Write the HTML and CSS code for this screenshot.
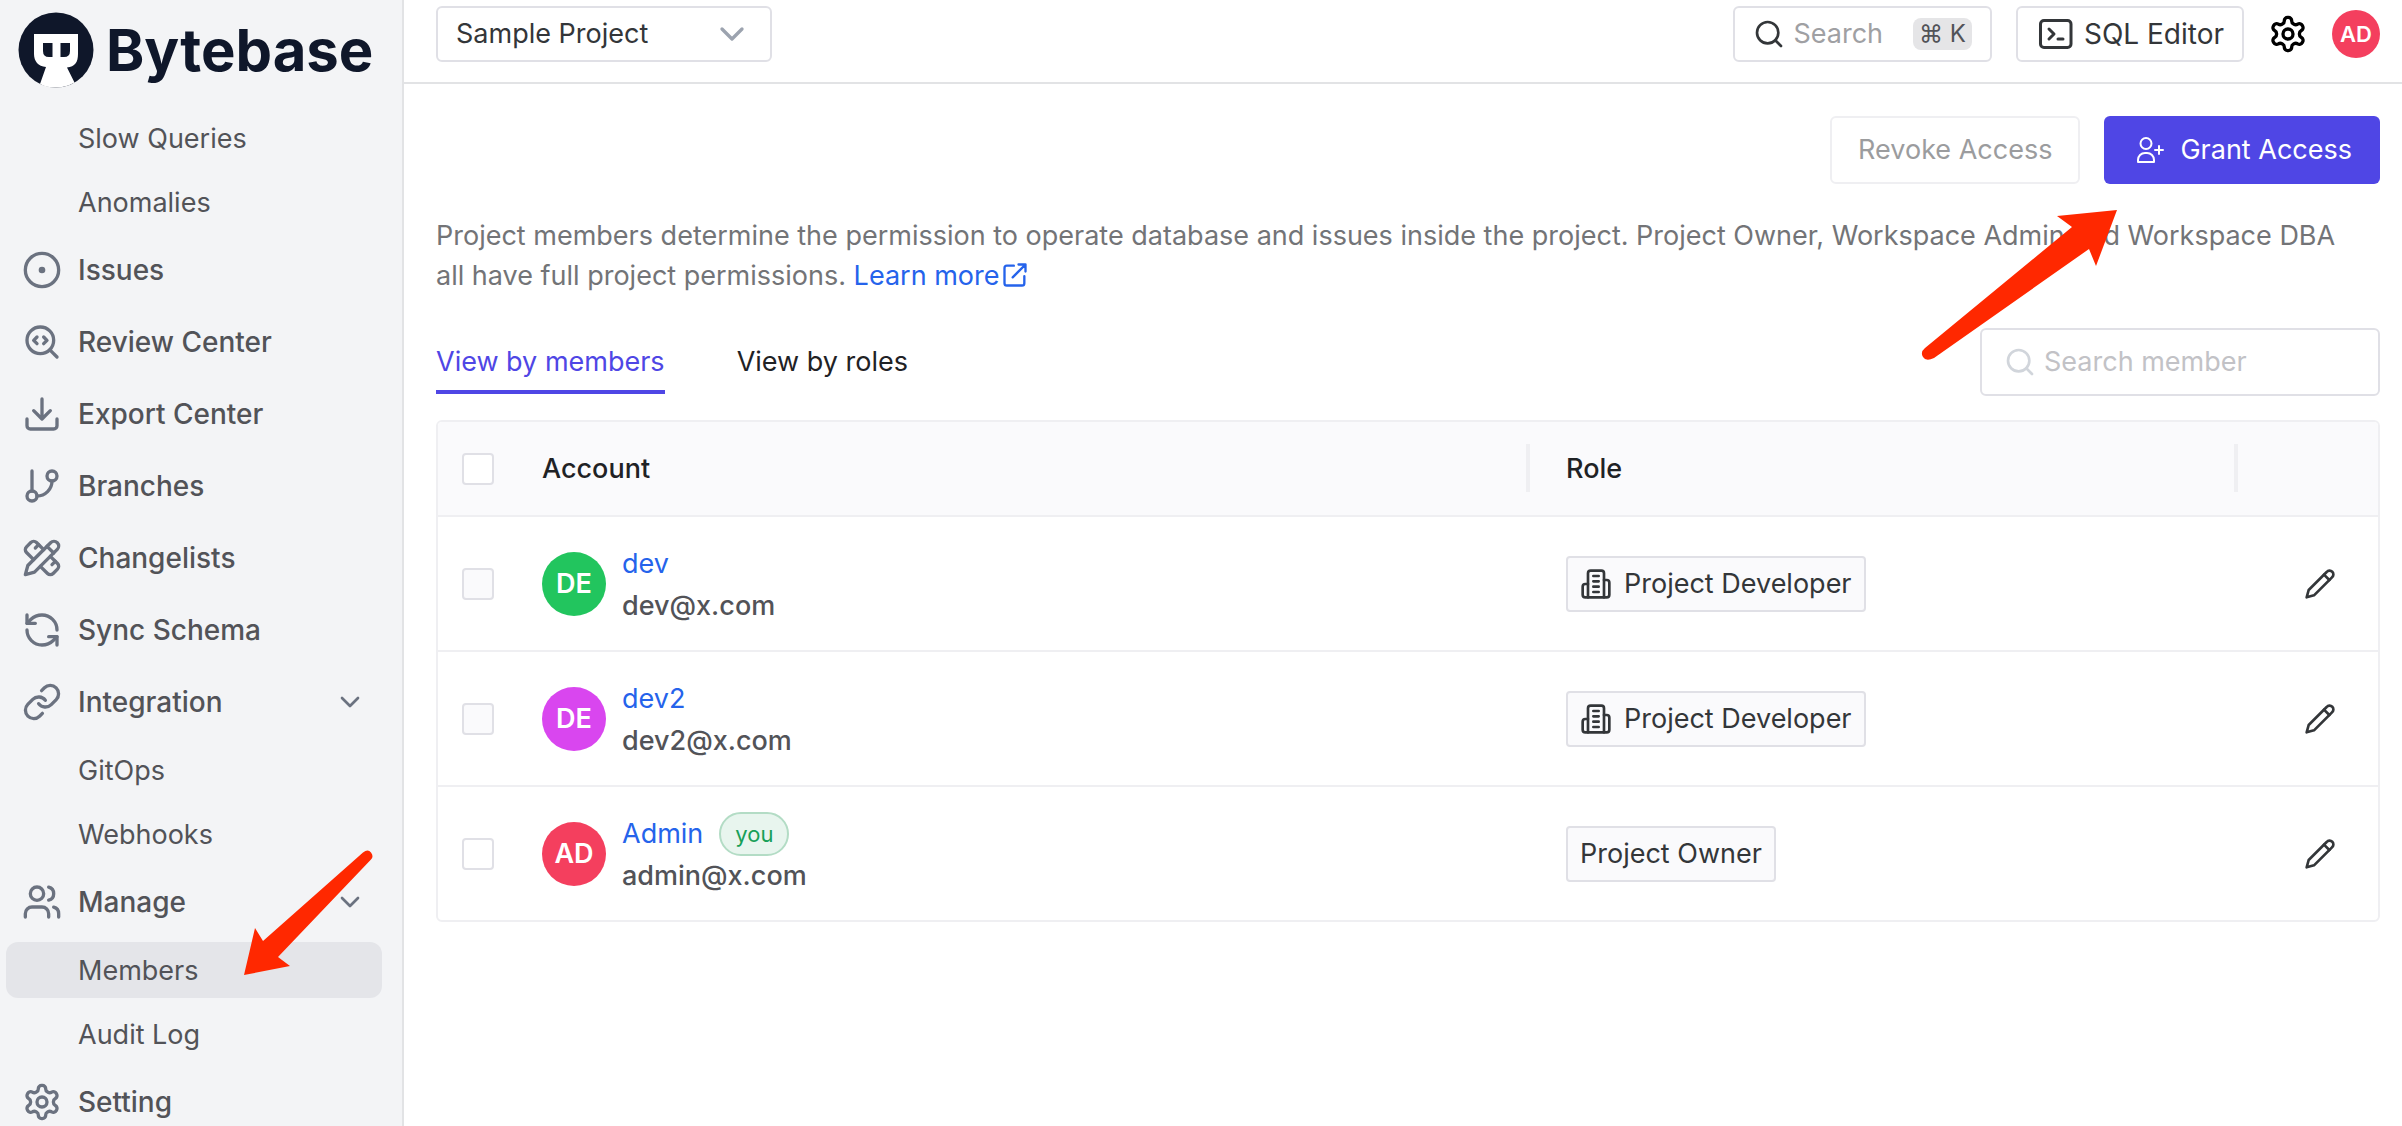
FILE: index.html
```html
<!DOCTYPE html>
<html lang="en">
<head>
<meta charset="utf-8">
<title>Members - Bytebase</title>
<link rel="stylesheet" href="styles.css">
</head>
<body>
<svg class="sprite" aria-hidden="true">
  <symbol id="i-chevron" viewBox="0 0 24 24"><path d="m6 9 6 6 6-6"/></symbol>
  <symbol id="i-search" viewBox="0 0 24 24"><circle cx="11" cy="11" r="8"/><path d="m21 21-4.3-4.3"/></symbol>
  <symbol id="i-settings" viewBox="0 0 24 24"><path d="M12.22 2h-.44a2 2 0 0 0-2 2v.18a2 2 0 0 1-1 1.73l-.43.25a2 2 0 0 1-2 0l-.15-.08a2 2 0 0 0-2.73.73l-.22.38a2 2 0 0 0 .73 2.73l.15.1a2 2 0 0 1 1 1.72v.51a2 2 0 0 1-1 1.74l-.15.09a2 2 0 0 0-.73 2.73l.22.38a2 2 0 0 0 2.73.73l.15-.08a2 2 0 0 1 2 0l.43.25a2 2 0 0 1 1 1.73V20a2 2 0 0 0 2 2h.44a2 2 0 0 0 2-2v-.18a2 2 0 0 1 1-1.73l.43-.25a2 2 0 0 1 2 0l.15.08a2 2 0 0 0 2.73-.73l.22-.39a2 2 0 0 0-.73-2.73l-.15-.08a2 2 0 0 1-1-1.74v-.5a2 2 0 0 1 1-1.74l.15-.09a2 2 0 0 0 .73-2.73l-.22-.38a2 2 0 0 0-2.73-.73l-.15.08a2 2 0 0 1-2 0l-.43-.25a2 2 0 0 1-1-1.73V4a2 2 0 0 0-2-2z"/><circle cx="12" cy="12" r="3"/></symbol>
  <symbol id="i-pencil" viewBox="0 0 24 24"><path d="M17 3a2.85 2.83 0 1 1 4 4L7.5 20.5 2 22l1.5-5.500Z"/><path d="m15 5 4 4"/></symbol>
  <symbol id="i-building" viewBox="0 0 24 24"><path d="M6 22V4a2 2 0 0 1 2-2h8a2 2 0 0 1 2 2v18Z"/><path d="M6 12H4a2 2 0 0 0-2 2v6a2 2 0 0 0 2 2h2"/><path d="M18 9h2a2 2 0 0 1 2 2v9a2 2 0 0 1-2 2h-2"/><path d="M10 6h4M10 10h4M10 14h4M10 18h4"/></symbol>
</svg>

<div class="app">
  <aside class="sidebar">
    <a class="brand" href="#">
      <svg class="brand-mark" viewBox="0 0 76 76" aria-hidden="true">
        <circle cx="38" cy="38" r="37.500" fill="#0f172a"/>
        <path fill="#fff" d="M16 22h44v20c0 8-3 13-11 13.500L56.500 70.500Q48 75.500 38 75.500T22 72L28 55C20 54.500 16 49 16 42Z"/>
        <path fill="#0f172a" d="M25 31h9.500v14H31q-6 0-6-6ZM42.500 31H52v8q0 6-6 6h-3.500Z"/>
      </svg>
      <span class="brand-name">Bytebase</span>
    </a>
    <nav class="nav" aria-label="Project">
      <a class="nav-sub" href="#">Slow Queries</a>
      <a class="nav-sub" href="#">Anomalies</a>
      <a class="nav-main" href="#"><svg class="icon icon-lg" viewBox="0 0 24 24"><circle cx="12" cy="12" r="10"/><circle cx="12" cy="12" r="1"/></svg>Issues</a>
      <a class="nav-main" href="#"><svg class="icon icon-lg" viewBox="0 0 24 24"><path d="m9 9-2 2 2 2M13 13l2-2-2-2"/><circle cx="11" cy="11" r="8"/><path d="m21 21-4.300-4.300"/></svg>Review Center</a>
      <a class="nav-main" href="#"><svg class="icon icon-lg" viewBox="0 0 24 24"><path d="M21 15v4a2 2 0 0 1-2 2H5a2 2 0 0 1-2-2v-4M7 10l5 5 5-5M12 15V3"/></svg>Export Center</a>
      <a class="nav-main" href="#"><svg class="icon icon-lg" viewBox="0 0 24 24"><path d="M6 3v12"/><circle cx="18" cy="6" r="3"/><circle cx="6" cy="18" r="3"/><path d="M18 9a9 9 0 0 1-9 9"/></svg>Branches</a>
      <a class="nav-main" href="#"><svg class="icon icon-lg" viewBox="0 0 24 24"><path d="m15 5 4 4"/><path d="M13 7 8.700 2.700a2.410 2.410 0 0 0-3.400 0L2.700 5.300a2.410 2.410 0 0 0 0 3.400L7 13"/><path d="m8 6 2-2"/><path d="m2 22 5.500-1.500L21.170 6.830a2.820 2.820 0 0 0-4-4L3.500 16.500Z"/><path d="m18 16 2-2"/><path d="m17 11 4.300 4.300c.94.94.94 2.460 0 3.400l-2.600 2.600c-.94.94-2.460.94-3.400 0L11 17"/></svg>Changelists</a>
      <a class="nav-main" href="#"><svg class="icon icon-lg" viewBox="0 0 24 24"><path d="M21 12a9 9 0 0 0-9-9 9.750 9.750 0 0 0-6.740 2.740L3 8"/><path d="M3 3v5h5"/><path d="M3 12a9 9 0 0 0 9 9 9.750 9.750 0 0 0 6.740-2.740L21 16"/><path d="M16 16h5v5"/></svg>Sync Schema</a>
      <button class="nav-main" type="button" aria-expanded="true"><svg class="icon icon-lg" viewBox="0 0 24 24"><path d="M10 13a5 5 0 0 0 7.540.54l3-3a5 5 0 0 0-7.070-7.070l-1.720 1.710"/><path d="M14 11a5 5 0 0 0-7.540-.54l-3 3a5 5 0 0 0 7.070 7.070l1.710-1.710"/></svg>Integration<svg class="icon icon-md nav-caret"><use href="#i-chevron"/></svg></button>
      <a class="nav-sub" href="#">GitOps</a>
      <a class="nav-sub" href="#">Webhooks</a>
      <button class="nav-main" type="button" aria-expanded="true"><svg class="icon icon-lg" viewBox="0 0 24 24"><path d="M16 21v-2a4 4 0 0 0-4-4H6a4 4 0 0 0-4 4v2"/><circle cx="9" cy="7" r="4"/><path d="M22 21v-2a4 4 0 0 0-3-3.870"/><path d="M16 3.130a4 4 0 0 1 0 7.750"/></svg>Manage<svg class="icon icon-md nav-caret"><use href="#i-chevron"/></svg></button>
      <a class="nav-sub is-active" href="#" aria-current="page">Members</a>
      <a class="nav-sub" href="#">Audit Log</a>
      <a class="nav-main" href="#"><svg class="icon icon-lg"><use href="#i-settings"/></svg>Setting</a>
    </nav>
    <svg class="arrow arrow-members" viewBox="0 0 130 130" aria-hidden="true"><path fill="#ff2800" d="M1 127 12 80l8 13L120 4.500q5-4 8 0t0 7L35 109l12 9Z"/></svg>
  </aside>

  <div class="page">
    <header class="topbar">
      <div class="select-wrap">
        <select class="select" aria-label="Project"><option>Sample Project</option></select>
        <svg class="icon icon-lg select-caret"><use href="#i-chevron"/></svg>
      </div>
      <div class="topbar-actions">
        <button class="btn-outline" type="button"><svg class="icon icon-md"><use href="#i-search"/></svg><span class="hint">Search</span><kbd class="kbd">⌘ K</kbd></button>
        <button class="btn-outline btn-sql" type="button"><svg class="icon icon-lg icon-terminal" viewBox="0 0 40 40"><rect x="4.500" y="6.500" width="30.500" height="27" rx="3.500"/><path d="m13 15 5 5-5 5M22 25h5"/></svg>SQL Editor</button>
        <button class="btn-icon btn-gear" type="button" aria-label="Settings"><svg class="icon icon-lg"><use href="#i-settings"/></svg></button>
        <button class="avatar avatar-sm avatar-red" type="button">AD</button>
      </div>
    </header>

    <main class="content">
      <div class="actions">
        <button class="btn btn-default" type="button" disabled>Revoke Access</button>
        <button class="btn btn-primary" type="button"><svg class="icon icon-md" viewBox="0 0 32 32"><circle cx="12" cy="9.500" r="5.500"/><path d="M4 28v-2a7 7 0 0 1 7-7h2a7 7 0 0 1 7 7v2ZM25 12v8M21 16h8"/></svg>Grant Access</button>
        <svg class="arrow arrow-grant" viewBox="0 0 198 154" aria-hidden="true"><path fill="#ff2800" d="M196 2 136 8l15 11L4 140q-5 4-2 9t11 1L168 41l7 17Z"/></svg>
      </div>
      <p class="intro">Project members determine the permission to operate database and issues inside the project. Project Owner, Workspace Admin and Workspace DBA all have full project permissions. <a class="link" href="#">Learn more<svg class="icon learn-icon" viewBox="0 0 24 24"><path d="M20 13v6a2 2 0 0 1-2 2H5a2 2 0 0 1-2-2V6a2 2 0 0 1 2-2h6M15 3h6v6M10 14 21 3"/></svg></a></p>

      <div class="toolbar">
        <div class="tabs" role="tablist">
          <button class="tab is-selected" type="button" role="tab" aria-selected="true">View by members</button>
          <button class="tab" type="button" role="tab" aria-selected="false">View by roles</button>
        </div>
        <label class="search"><svg class="icon icon-md"><use href="#i-search"/></svg><input class="search-input" type="search" placeholder="Search member" aria-label="Search member"></label>
      </div>

      <div class="table-wrap">
        <table class="table">
          <colgroup><col class="col-check"><col><col class="col-role"><col class="col-edit"></colgroup>
          <thead>
            <tr><th><input class="check" type="checkbox" aria-label="Select all"></th><th class="has-divider">Account</th><th class="has-divider">Role</th><th></th></tr>
          </thead>
          <tbody>
            <tr>
              <td><input class="check" type="checkbox" aria-label="Select dev" disabled></td>
              <td><div class="account"><span class="avatar avatar-green">DE</span><div><div class="name"><a class="link" href="#">dev</a></div><div class="email">dev@x.com</div></div></div></td>
              <td><span class="tag"><svg class="icon icon-md"><use href="#i-building"/></svg>Project Developer</span></td>
              <td class="edit"><button class="btn-icon" type="button" aria-label="Edit dev"><svg class="icon icon-md"><use href="#i-pencil"/></svg></button></td>
            </tr>
            <tr>
              <td><input class="check" type="checkbox" aria-label="Select dev2" disabled></td>
              <td><div class="account"><span class="avatar avatar-purple">DE</span><div><div class="name"><a class="link" href="#">dev2</a></div><div class="email">dev2@x.com</div></div></div></td>
              <td><span class="tag"><svg class="icon icon-md"><use href="#i-building"/></svg>Project Developer</span></td>
              <td class="edit"><button class="btn-icon" type="button" aria-label="Edit dev2"><svg class="icon icon-md"><use href="#i-pencil"/></svg></button></td>
            </tr>
            <tr>
              <td><input class="check" type="checkbox" aria-label="Select Admin"></td>
              <td><div class="account"><span class="avatar avatar-red">AD</span><div><div class="name"><a class="link" href="#">Admin</a><span class="pill">you</span></div><div class="email">admin@x.com</div></div></div></td>
              <td><span class="tag">Project Owner</span></td>
              <td class="edit"><button class="btn-icon" type="button" aria-label="Edit Admin"><svg class="icon icon-md"><use href="#i-pencil"/></svg></button></td>
            </tr>
          </tbody>
        </table>
      </div>
    </main>
  </div>
</div>
</body>
</html>
```
FILE: styles.css
```css
* { box-sizing: border-box; }

body {
  margin: 0;
  font-family: Inter, "Liberation Sans", sans-serif;
  font-size: 27px;
  line-height: 40px;
  color: #333639;
  background: #fff;
}

button, input, select { font: inherit; color: inherit; }
button { margin: 0; padding: 0; border: 0; background: none; cursor: pointer; }
a { color: inherit; text-decoration: none; }

.sprite { display: none; }
.icon {
  flex: none;
  width: 28px;
  height: 28px;
  fill: none;
  stroke: currentColor;
  stroke-width: 2;
  stroke-linecap: round;
  stroke-linejoin: round;
}
.icon-md { width: 32px; height: 32px; }
.icon-lg { width: 40px; height: 40px; }
.icon-terminal { stroke-width: 3; }

.app { display: flex; height: 100vh; overflow: hidden; }

/* Sidebar */
.sidebar {
  position: relative;
  flex: none;
  width: 404px;
  padding: 0 20px 0 6px;
  background: #f3f4f6;
  border-right: 2px solid #e2e3e5;
}
.brand { display: flex; align-items: center; gap: 12px; height: 106px; padding: 0 0 6px 12px; color: #0f172a; }
.brand-mark { flex: none; width: 76px; height: 76px; }
.brand-name { font-size: 58px; line-height: 76px; font-weight: 700; }
.nav { display: flex; flex-direction: column; color: #525358; }
.nav-main { display: flex; align-items: center; gap: 16px; height: 72px; padding: 0 16px; font-size: 28px; font-weight: 500; text-align: left; }
.nav-main .icon { color: #6b7280; }
.nav-main .nav-caret { margin-left: auto; }
.nav-sub { height: 56px; margin: 4px 0; padding: 9px 0 7px 72px; border-radius: 12px; }
.nav-sub.is-active { background: #e4e5e9; }

/* Top bar */
.page { flex: 1; min-width: 0; }
.topbar { display: flex; justify-content: space-between; height: 84px; padding: 6px 22px 0 32px; border-bottom: 2px solid #e2e3e5; }
.select-wrap { position: relative; width: 336px; height: 56px; }
.select { appearance: none; width: 100%; height: 56px; padding: 0 60px 0 18px; border: 2px solid #e0e0e6; border-radius: 6px; background: #fff; }
.select-caret { position: absolute; right: 20px; top: 8px; color: #9ca3af; pointer-events: none; }
.topbar-actions { display: flex; gap: 24px; height: 56px; align-items: center; }
.btn-outline { display: flex; align-items: center; gap: 8px; height: 56px; padding: 0 18px; border: 2px solid #e0e0e6; border-radius: 6px; }
.btn-sql { font-size: 28px; }
.hint { color: #9fa0a3; }
.kbd { margin-left: 22px; padding: 0 6px; border-radius: 8px; background: #e5e5e7; font: 24px/32px Inter, "Liberation Sans", sans-serif; color: #525358; }
.btn-icon { display: flex; }
.btn-gear { color: #000; }

.avatar {
  display: flex;
  flex: none;
  align-items: center;
  justify-content: center;
  width: 64px;
  height: 64px;
  border-radius: 50%;
  color: #fff;
  font-weight: 600;
}
.avatar-sm { width: 48px; height: 48px; font-size: 22px; }
.avatar-green { background: #22c55e; }
.avatar-purple { background: #d946ef; }
.avatar-red { background: #f43f5e; }

/* Content */
.content { padding: 32px 22px 0 32px; }
.actions { position: relative; display: flex; justify-content: flex-end; gap: 24px; }
.btn { display: flex; align-items: center; gap: 14px; height: 68px; padding: 0 28px; border-radius: 6px; }
.btn-default { border: 2px solid #efeff2; color: #9b9c9e; padding: 0 26px; }
.btn-primary { background: #4f46e5; color: #fff; padding: 0 28px 0 30px; }
.intro { margin: 32px 0 0; padding-right: 16px; color: #737477; }
.link { color: #2563eb; }
.learn-icon { margin-left: 2px; vertical-align: -4px; }

.toolbar { display: flex; justify-content: space-between; margin-top: 32px; }
.tabs { display: flex; gap: 72px; align-items: flex-end; height: 66px; }
.tab { height: 54px; padding-bottom: 6px; border-bottom: 4px solid transparent; color: #1f2225; }
.tab.is-selected { color: #4f46e5; border-color: #4f46e5; }
.search { display: flex; align-items: center; gap: 8px; width: 400px; height: 68px; padding: 0 22px; border: 2px solid #e0e0e6; border-radius: 6px; color: #d1d5db; }
.search-input { flex: 1; min-width: 0; border: 0; padding: 0; outline: 0; background: none; color: #333639; }
.search-input::placeholder { color: #c2c2c6; opacity: 1; }

.table-wrap { margin-top: 24px; border: 2px solid #efeff2; border-radius: 6px; overflow: hidden; }
.table { width: 100%; table-layout: fixed; border-spacing: 0; text-align: left; }
.col-check { width: 80px; }
.col-role { width: 708px; }
.col-edit { width: 128px; }
.table th { position: relative; height: 95px; padding: 0 24px; background: #fafafc; border-bottom: 2px solid #efeff2; font-weight: 500; color: #1f2225; }
.has-divider::after { content: ""; position: absolute; right: 12px; top: 22px; width: 4px; height: 48px; background: #efeff2; }
.table td { height: 135px; padding: 0 24px; border-bottom: 2px solid #efeff2; }
.table tr:last-child td { height: 133px; border-bottom: 0; }
.table td:last-child { padding-right: 42px; }
.check { appearance: none; display: block; width: 32px; height: 32px; margin: 0; border: 2px solid #e0e0e6; border-radius: 4px; background: #fff; }
.check:disabled { background: #fafafc; }
.account { display: flex; align-items: center; gap: 16px; }
.name { display: flex; align-items: center; gap: 16px; height: 44px; }
.email { color: #525358; font-weight: 500; }
.pill { height: 44px; padding: 0 14px; border: 2px solid #b3dcc5; border-radius: 22px; background: #e8f5ee; color: #18a058; font-size: 22px; }
.tag { display: inline-flex; align-items: center; gap: 12px; height: 56px; padding: 0 12px; border: 2px solid #e0e0e6; border-radius: 4px; background: #fafafc; vertical-align: middle; }
.edit .btn-icon { margin-left: auto; }

/* Callout arrows drawn over the page */
.arrow { position: absolute; pointer-events: none; }
.arrow-members { left: 243px; top: 848px; width: 130px; height: 130px; }
.arrow-grant { right: 261px; top: 92px; width: 198px; height: 154px; }
```
